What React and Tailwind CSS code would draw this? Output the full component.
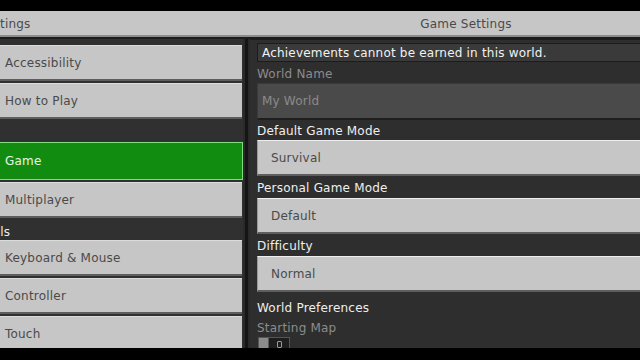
import React from "react";

const font = { fontFamily: '"DejaVu Sans", "Liberation Sans", sans-serif', letterSpacing: "0.2px" };

function LeftButton({ label, active }) {
  if (active) {
    return (
      <div className="h-[38px] w-[243px] bg-[#118c11] border border-[#7fdc7f] border-l-0 flex items-center pl-[5px] text-[12px] text-[#e8f5e8] shrink-0">
        {label}
      </div>
    );
  }
  return (
    <div className="h-[36px] w-[242px] bg-[#c6c6c6] border-t border-t-[#dcdcdc] border-b-2 border-b-[#5e5e5e] flex items-center pl-[5px] pt-[1px] text-[12px] text-[#4a4a4a] shrink-0">
      {label}
    </div>
  );
}

function Dropdown({ value }) {
  return (
    <div className="h-[36px] bg-[#c6c6c6] border-t border-t-[#eeeeee] border-l border-l-[#9a9a9a] border-b-2 border-b-[#5e5e5e] flex items-center pl-[13px] pt-[1px] text-[12px] text-[#4a4a4a] shrink-0">
      {value}
    </div>
  );
}

function Label({ children, h, dim }) {
  return (
    <div className={`${h} flex items-center pt-[2px] text-[12px] shrink-0 ${dim ? "text-[#8c8c8c]" : "text-[#efefef]"}`}>
      {children}
    </div>
  );
}

export default function App() {
  return (
    <div className="w-[640px] h-[360px] bg-black flex flex-col overflow-hidden" style={font}>
      <div className="h-[11px] bg-black shrink-0" />
      <div className="h-[24px] bg-[#c6c6c6] flex items-center pt-[2px] shrink-0 text-[12px] text-[#4a4a4a]">
        <div className="w-[250px]">tings</div>
        <div className="flex-1 flex justify-center pl-[42px]">Game Settings</div>
      </div>
      <div className="h-[2px] bg-[#8c8c8c] shrink-0" />
      <div className="h-[2px] bg-[#1c1c1c] shrink-0" />
      <div className="flex-1 flex min-h-0">
        <div className="w-[243px] bg-[#303030] flex flex-col pt-[6px] gap-[2px] shrink-0">
          <LeftButton label="Accessibility" />
          <LeftButton label="How to Play" />
          <div className="h-[19px] shrink-0" />
          <LeftButton label="Game" active />
          <LeftButton label="Multiplayer" />
          <div className="h-[18px] flex items-end text-[12px] leading-none text-[#efefef] shrink-0 whitespace-nowrap">
            <span className="-ml-[41px]">Controls</span>
          </div>
          <LeftButton label="Keyboard & Mouse" />
          <LeftButton label="Controller" />
          <LeftButton label="Touch" />
        </div>
        <div className="w-[7px] bg-[#2a2a2a] flex justify-center shrink-0">
          <div className="w-[3px] bg-[#151515]" />
        </div>
        <div className="flex-1 bg-[#2e2e2e] flex flex-col pl-[7px] pt-[3px] min-w-0 border-t border-t-[#1e1e1e]">
          <div className="h-[19px] bg-[#3a3a3a] border border-[#1c1c1c] border-r-0 flex items-center pl-[4px] pt-[1px] text-[12px] text-[#f2f2f2] shrink-0 whitespace-nowrap">
            Achievements cannot be earned in this world.
          </div>
          <Label h="h-[21px]" dim>World Name</Label>
          <div className="h-[37px] bg-[#4a4a4a] border-l border-t border-[#3a3a3a] border-b-2 border-b-[#1e1e1e] flex items-center pl-[4px] text-[12px] text-[#8a8a8a] shrink-0">
            My World
          </div>
          <Label h="h-[20px]">Default Game Mode</Label>
          <Dropdown value="Survival" />
          <Label h="h-[22px]">Personal Game Mode</Label>
          <Dropdown value="Default" />
          <Label h="h-[22px]">Difficulty</Label>
          <Dropdown value="Normal" />
          <div className="h-[25px] flex items-end text-[12px] text-[#efefef] shrink-0">World Preferences</div>
          <Label h="h-[19px]" dim>Starting Map</Label>
          <div className="flex items-start pl-[1px] pt-[1px] shrink-0">
            <div className="h-[14px] w-[32px] bg-[#1e1e1e] border border-[#555555] flex">
              <div className="w-[10px] h-full bg-[#8c8c8c] border-r border-[#5a5a5a]" />
              <div className="flex-1 flex items-center justify-center">
                <div className="w-[5px] h-[7px] border border-[#9a9a9a] rounded-[1px]" />
              </div>
            </div>
          </div>
        </div>
      </div>
      <div className="h-[12px] bg-black shrink-0" />
    </div>
  );
}
